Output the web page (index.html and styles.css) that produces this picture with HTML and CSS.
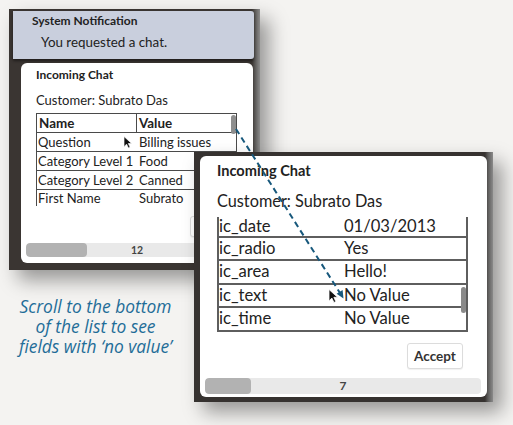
FILE: index.html
```html
<!DOCTYPE html>
<html>
<head>
<meta charset="utf-8">
<link rel="stylesheet" href="styles.css">
</head>
<body>
<div class="canvas">
  <div class="win win-left">
    <div class="notif">
      <div class="notif-title">System Notification</div>
      <div class="notif-msg">You requested a chat.</div>
    </div>
    <div class="panel panel-left">
      <div class="title">Incoming Chat</div>
      <div class="customer">Customer: Subrato Das</div>
      <div class="grid grid-left">
        <div class="row head">
          <div class="c1">Name</div><div class="c2">Value</div>
        </div>
        <div class="row"><div class="c1">Question</div><div class="c2">Billing issues</div></div>
        <div class="row"><div class="c1">Category Level 1</div><div class="c2">Food</div></div>
        <div class="row"><div class="c1">Category Level 2</div><div class="c2">Canned</div></div>
        <div class="row last"><div class="c1">First Name</div><div class="c2">Subrato</div></div>
        <div class="vthumb"></div>
      </div>
      <div class="actions"><button class="btn">Accept</button></div>
      <div class="pager"><div class="pthumb"></div><span class="pnum">12</span></div>
    </div>
  </div>

  <div class="win win-right">
    <div class="panel panel-right">
      <div class="title">Incoming Chat</div>
      <div class="customer">Customer: Subrato Das</div>
      <div class="grid grid-right">
        <div class="row first"><div class="c1">ic_date</div><div class="c2">01/03/2013</div></div>
        <div class="row"><div class="c1">ic_radio</div><div class="c2">Yes</div></div>
        <div class="row"><div class="c1">ic_area</div><div class="c2">Hello!</div></div>
        <div class="row"><div class="c1">ic_text</div><div class="c2">No Value</div></div>
        <div class="row"><div class="c1">ic_time</div><div class="c2">No Value</div></div>
        <div class="vthumb"></div>
      </div>
      <div class="actions"><button class="btn">Accept</button></div>
      <div class="pager"><div class="pthumb"></div><span class="pnum">7</span></div>
    </div>
  </div>

  <div class="caption">
    <div class="cline">Scroll to the bottom</div>
    <div class="cline">of the list to see</div>
    <div class="cline">fields with ‘no value’</div>
  </div>

  <svg class="overlay" width="513" height="425" viewBox="0 0 513 425">
    <line x1="236" y1="129" x2="340" y2="293" stroke="#17587c" stroke-width="2" stroke-dasharray="6 4"/>
    <polygon points="343.5,298.5 342.6,289.9 336.6,293.7" fill="#17587c"/>
    <path transform="translate(124 136.5) scale(0.85)" d="M0 0 L0 12 L3 9 L5.2 13.6 L7.2 12.7 L5.1 8.2 L9 8.2 Z" fill="#111" stroke="#fff" stroke-width="0.8"/>
    <path transform="translate(329 289.5) scale(0.95)" d="M0 0 L0 12 L3 9 L5.2 13.6 L7.2 12.7 L5.1 8.2 L9 8.2 Z" fill="#111" stroke="#fff" stroke-width="0.8"/>
  </svg>
</div>
</body>
</html>
```
FILE: styles.css
```css
* { box-sizing: border-box; }
html, body { margin: 0; padding: 0; }
body {
  background: #f4f3f1;
  font-family: Lato, "Open Sans", sans-serif;
  color: #222;
}
.canvas {
  position: relative;
  width: 513px;
  height: 425px;
  overflow: hidden;
  background: #f4f3f1;
}

/* windows */
.win {
  position: absolute;
  display: flex;
  flex-direction: column;
  box-shadow: 9px 10px 18px rgba(0,0,0,0.38);
}
.win-left {
  left: 9px;
  top: 9px;
  width: 251px;
  height: 261px;
  background: linear-gradient(to right, #3a3532 0, #3a3532 243px, #5a5856 246px, #8c8c8c 251px);
}
.win-right {
  left: 194px;
  top: 152px;
  width: 299px;
  height: 250px;
  background: linear-gradient(to right, #363230 0, #363230 291px, #5c5b5a 294px, #8a8a8a 299px);
}

/* notification */
.notif {
  margin: 2px 0 0 4px;
  width: 241px;
  height: 48px;
  background: #c9cfdd;
  padding: 3px 0 0 19px;
  box-shadow: 0 2px 3px rgba(0,0,0,0.45);
  border-radius: 0 3px 3px 0;
}
.notif-title {
  font-size: 12px;
  font-weight: 700;
  line-height: 14px;
}
.notif-msg {
  font-size: 13.4px;
  line-height: 16px;
  margin: 6px 0 0 9px;
}

/* panels */
.panel {
  background: #fff;
  border-radius: 6px;
  display: flex;
  flex-direction: column;
}
.panel-left {
  margin: 4px 0 0 12px;
  width: 232px;
  height: 200px;
  padding-top: 5px;
}
.panel-right {
  margin: 4px 0 0 6px;
  width: 287px;
  height: 241px;
  padding-top: 7px;
}
.title { font-weight: 700; }
.panel-left .title { font-size: 12px; line-height: 14px; margin-left: 15px; }
.panel-right .title { font-size: 14.6px; line-height: 16px; margin-left: 17px; }
.panel-left .customer { font-size: 13px; line-height: 16px; margin: 10px 0 0 15px; }
.panel-right .customer { font-size: 16.3px; line-height: 19px; margin: 12px 0 0 17px; }

/* grids */
.grid { position: relative; }
.row {
  display: flex;
  white-space: nowrap;
}
.grid-left {
  margin: 5px 0 0 15px;
  width: 201px;
  height: 93px;
  border: 1px solid #4a4a4a;
  border-bottom: 0;
}
.grid-left .row { height: 19px; font-size: 13px; line-height: 18px; border-bottom: 1px solid #4a4a4a; }
.grid-left .row.last { height: 16px; border-bottom: 0; line-height: 16px; }
.grid-left .c1 { width: 100px; padding-left: 1px; }
.grid-left .c2 { padding-left: 2px; }
.grid-left .head { font-weight: 700; font-size: 13.4px; }
.grid-left .head .c1 { border-right: 1px solid #4a4a4a; padding-left: 2px; }
.grid-left .vthumb {
  position: absolute;
  right: 0;
  top: 1px;
  width: 5px;
  height: 19px;
  border-radius: 3px;
  background: #8e8e8e;
}

.grid-right {
  margin: 7px 0 0 17px;
  width: 251px;
  border-left: 2px solid #5e5e5e;
  border-right: 2px solid #5e5e5e;
}
.grid-right .row { height: 23.5px; font-size: 16.6px; line-height: 21px; border-bottom: 2px solid #5e5e5e; }
.grid-right .row.first { height: 20.5px; line-height: 18px; }
.grid-right .c1 { width: 125px; padding-left: 0; }
.grid-right .vthumb {
  position: absolute;
  right: 0;
  top: 70px;
  width: 5px;
  height: 26px;
  border-radius: 3px;
  background: #8a8a8a;
}

/* actions */
.actions { display: flex; justify-content: flex-end; }
.btn {
  font-family: Lato, "Open Sans", sans-serif;
  background: #fff;
  border: 1px solid #dcdcdc;
  border-radius: 3px;
  color: #333;
  font-weight: 700;
  padding: 0;
  box-shadow: 0 1px 1px rgba(0,0,0,0.06);
}
.panel-left .actions { margin: 10px 7px 0 0; }
.panel-left .btn { width: 56px; height: 21px; font-size: 11px; }
.panel-right .actions { margin: 11px 24px 0 0; }
.panel-right .btn { width: 56px; height: 26px; font-size: 13.5px; }

/* pager */
.pager {
  position: relative;
  display: flex;
  align-items: center;
  justify-content: center;
  background: #e9e9e9;
  border-radius: 4px;
  overflow: hidden;
  font-weight: 700;
  color: #444;
}
.pthumb {
  position: absolute;
  left: 0;
  top: 0;
  bottom: 0;
  background: #b2b2b2;
  border-radius: 4px;
}
.pnum { position: relative; }
.panel-left .pager { margin: 6px 5px 0 5px; height: 14px; font-size: 10.5px; }
.panel-left .pthumb { width: 61px; }
.panel-right .pager { margin: 9px 6px 0 5px; height: 16px; font-size: 12px; }
.panel-right .pthumb { width: 46px; }

/* caption */
.caption {
  position: absolute;
  left: 0;
  top: 296px;
  width: 191px;
  text-align: center;
  font-family: "Open Sans", Lato, sans-serif;
  font-style: italic;
  font-size: 17.4px;
  color: #1f6d98;
}
.cline { height: 20px; line-height: 20px; }

.overlay {
  position: absolute;
  left: 0;
  top: 0;
  pointer-events: none;
}
```
